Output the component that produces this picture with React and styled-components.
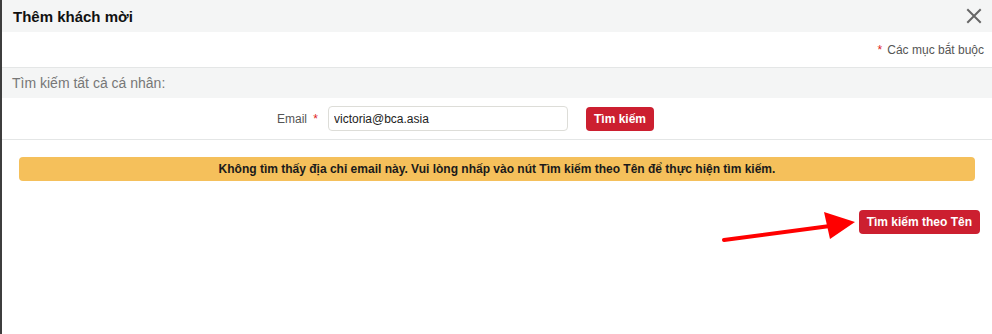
import React from "react";
import styled, { createGlobalStyle } from "styled-components";

const Global = createGlobalStyle`
  html, body { margin: 0; padding: 0; background: #ffffff; }
  body { font-family: "Liberation Sans", Arial, sans-serif; }
  * { box-sizing: border-box; }
`;

const Frame = styled.div`
  position: relative;
  width: 992px;
  height: 334px;
  border-left: 2px solid #3d3d3d;
  background: #fff;
  overflow: hidden;
`;

const Header = styled.div`
  height: 32px;
  background: #f4f5f5;
  display: flex;
  align-items: center;
  justify-content: space-between;
  padding: 0 8px 0 11px;
`;

const Title = styled.h4`
  margin: 0;
  font-size: 15px;
  font-weight: bold;
  color: #111;
`;

const CloseBtn = styled.button`
  border: 0;
  background: transparent;
  padding: 0;
  width: 20px;
  height: 20px;
  display: flex;
  align-items: center;
  justify-content: center;
  cursor: pointer;
`;

const RequiredNote = styled.div`
  height: 36px;
  display: flex;
  align-items: center;
  justify-content: flex-end;
  padding-right: 8px;
  font-size: 12px;
  color: #555;
  border-bottom: 1px solid #e4e6e6;
`;

const Star = styled.span`
  color: #e02424;
  margin-right: ${(p) => p.$gap || 4}px;
  margin-left: ${(p) => p.$left || 0}px;
`;

const SectionTitle = styled.div`
  height: 30px;
  background: #f4f5f5;
  display: flex;
  align-items: center;
  padding-left: 10px;
  font-size: 14px;
  color: #777;
`;

const FormRow = styled.div`
  height: 42px;
  display: flex;
  align-items: center;
  border-bottom: 1px solid #e4e6e6;
`;

const Label = styled.label`
  width: 320px;
  text-align: right;
  font-size: 12px;
  color: #555;
  margin-right: 6px;
`;

const Input = styled.input`
  width: 240px;
  height: 25px;
  border: 1px solid #ddddd8;
  border-radius: 4px;
  padding: 0 5px;
  font-family: inherit;
  font-size: 12px;
  color: #222;
  outline: none;
  margin-right: 18px;
`;

const RedButton = styled.button`
  height: 24px;
  padding: 0 ${(p) => p.$pad || 8}px;
  background: #cc1f30;
  color: #fff;
  border: 0;
  border-radius: 4px;
  font-family: inherit;
  font-weight: bold;
  font-size: 12px;
  cursor: pointer;
`;

const Body = styled.div`
  padding: 17px 17px 0 17px;
`;

const Alert = styled.div`
  height: 24px;
  background: #f5c05b;
  border-radius: 4px;
  display: flex;
  align-items: center;
  justify-content: center;
  font-size: 12px;
  font-weight: bold;
  color: #1a1a1a;
`;

const Actions = styled.div`
  display: flex;
  justify-content: flex-end;
  margin-top: 29px;
  margin-right: -5px;
`;

const Arrow = styled.svg`
  position: absolute;
  left: 0;
  top: 0;
  pointer-events: none;
`;

export default function App() {
  return (
    <>
      <Global />
      <Frame>
        <Header>
          <Title>Thêm khách mời</Title>
          <CloseBtn aria-label="close">
            <svg width="16" height="16" viewBox="0 0 16 16">
              <path d="M2 2 L14 14 M14 2 L2 14" stroke="#666" strokeWidth="2" strokeLinecap="square" />
            </svg>
          </CloseBtn>
        </Header>
        <RequiredNote>
          <Star $gap={5}>*</Star>Các mục bắt buộc
        </RequiredNote>
        <SectionTitle>Tìm kiếm tất cả cá nhân:</SectionTitle>
        <FormRow>
          <Label>
            Email <Star $left={3} $gap={0}>*</Star>
          </Label>
          <Input defaultValue="victoria@bca.asia" />
          <RedButton $pad={8}>Tìm kiếm</RedButton>
        </FormRow>
        <Body>
          <Alert>
            Không tìm thấy địa chỉ email này. Vui lòng nhấp vào nút Tìm kiếm theo Tên để thực hiện tìm kiếm.
          </Alert>
          <Actions>
            <RedButton $pad={8}>Tìm kiếm theo Tên</RedButton>
          </Actions>
        </Body>
        <Arrow width="992" height="334" viewBox="0 0 992 334">
          <path d="M722 240 L828 226" stroke="#ff0000" strokeWidth="4" strokeLinecap="round" />
          <path d="M853 222 L822 212 L828 239 Z" fill="#ff0000" />
        </Arrow>
      </Frame>
    </>
  );
}
